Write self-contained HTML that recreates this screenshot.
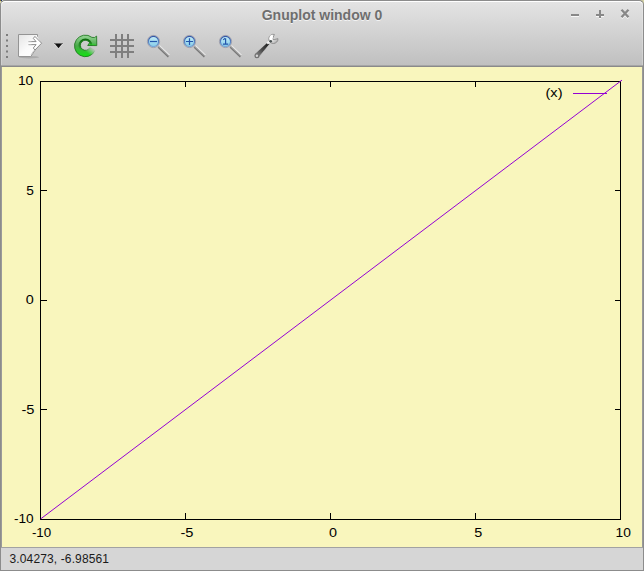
<!DOCTYPE html>
<html><head><meta charset="utf-8">
<style>
html,body{margin:0;padding:0;width:644px;height:571px;overflow:hidden;background:#c9c7a0;}
body{position:relative;font-family:"Liberation Sans",sans-serif;}
.abs{position:absolute;}
#frame{left:0;top:0;width:644px;height:571px;background:#8c8c8c;border-radius:5px 5px 0 0;}
#c1{left:0;top:0;width:1px;height:1px;background:#7a6c2a;}#c2{left:1px;top:0;width:1px;height:1px;background:#1c2c78;}#c3{left:2px;top:0;width:1px;height:1px;background:#c4d4c4;}#c4{left:0;top:1px;width:1px;height:2px;background:#d4d2a8;}#c5{left:643px;top:0;width:1px;height:2px;background:#d8d6a8;}
#head{left:1px;top:1px;width:642px;height:64px;background:linear-gradient(#e4e4e4,#c0c0c0);border-radius:4.5px 4.5px 0 0;box-shadow:inset 0 1px 0 #fff, inset 1px 0 0 rgba(255,255,255,0.22), inset -1px 0 0 rgba(255,255,255,0.22);}
#titletext{left:0;top:7px;width:644px;text-align:center;font-weight:bold;font-size:14px;color:#6e6e6e;text-shadow:0 1px 0 rgba(255,255,255,0.7);white-space:nowrap;}
#sep1{left:1px;top:65px;width:642px;height:1px;background:#a6a6a6;}
#sep2{left:1px;top:66px;width:642px;height:1px;background:#8a8a8a;}
#canvasside{left:1px;top:67px;width:642px;height:480px;background:#9a9a9a;}
#canvas{left:2px;top:67px;width:640px;height:480px;background:#f9f6bd;}
#sline{left:1px;top:547px;width:642px;height:1px;background:#a2a2a2;}
#status{left:1px;top:548px;width:642px;height:22px;background:#d6d6d6;}
#stext{left:9.5px;top:552px;font-size:12px;color:#1a1a1a;white-space:nowrap;letter-spacing:0.13px;}
</style></head><body>
<div id="frame" class="abs"></div><div id="c1" class="abs"></div><div id="c2" class="abs"></div><div id="c3" class="abs"></div><div id="c4" class="abs"></div><div id="c5" class="abs"></div>
<div id="head" class="abs"></div>
<div id="titletext" class="abs">Gnuplot window 0</div>
<div id="sep1" class="abs"></div>
<div id="sep2" class="abs"></div>
<div id="canvasside" class="abs"></div>
<div id="canvas" class="abs"></div>
<div id="sline" class="abs"></div>
<div id="status" class="abs"></div>
<div id="stext" class="abs">3.04273, -6.98561</div>

<svg class="abs" style="left:0;top:0" width="644" height="571" viewBox="0 0 644 571">
  <defs>
    <linearGradient id="lensg" x1="0" y1="0" x2="0" y2="1">
      <stop offset="0" stop-color="#c4ecf6"/>
      <stop offset="1" stop-color="#86cdea"/>
    </linearGradient>
    <linearGradient id="handleg" x1="0" y1="0" x2="1" y2="1">
      <stop offset="0" stop-color="#e8e8e8"/>
      <stop offset="1" stop-color="#6f6f6f"/>
    </linearGradient>
    <linearGradient id="rfade" gradientUnits="userSpaceOnUse" x1="94" y1="48.5" x2="87" y2="56">
      <stop offset="0" stop-color="#fff" stop-opacity="0"/>
      <stop offset="0.75" stop-color="#fff" stop-opacity="1"/>
    </linearGradient>
    <linearGradient id="greeng" x1="0" y1="0" x2="0" y2="1">
      <stop offset="0" stop-color="#98d698"/>
      <stop offset="0.5" stop-color="#48a848"/>
      <stop offset="1" stop-color="#12e212"/>
    </linearGradient>
    <linearGradient id="innerg" x1="0" y1="0" x2="0" y2="1">
      <stop offset="0" stop-color="#086808" stop-opacity="0.95"/>
      <stop offset="0.6" stop-color="#0a7a0a" stop-opacity="0.5"/>
      <stop offset="1" stop-color="#10c010" stop-opacity="0"/>
    </linearGradient>
    <linearGradient id="pageg" x1="0" y1="0" x2="1" y2="1">
      <stop offset="0" stop-color="#e4e4e4"/>
      <stop offset="0.5" stop-color="#fafafa"/>
      <stop offset="1" stop-color="#ffffff"/>
    </linearGradient>
    <linearGradient id="blueg" x1="0" y1="0" x2="0" y2="1">
      <stop offset="0" stop-color="#3458a8"/>
      <stop offset="1" stop-color="#78a8d8"/>
    </linearGradient>
    <linearGradient id="wrg" gradientUnits="userSpaceOnUse" x1="268" y1="43" x2="256" y2="56">
      <stop offset="0" stop-color="#1e1e1e"/>
      <stop offset="0.5" stop-color="#4a4a4a"/>
      <stop offset="1" stop-color="#8a8a8a"/>
    </linearGradient>
    <linearGradient id="headg" x1="0" y1="0" x2="1" y2="1">
      <stop offset="0" stop-color="#ffffff"/>
      <stop offset="0.45" stop-color="#eeeeee"/>
      <stop offset="1" stop-color="#9a9a9a"/>
    </linearGradient>
    <g id="mag">
      <path d="M158.4 46.1L168.9 56.1" stroke="#a4a4a4" stroke-width="3"/>
      <path d="M159.4 45.4L169.6 55.2" stroke="#ececec" stroke-width="1.1"/>
      <path d="M158.2 47.3L168.3 57" stroke="#777" stroke-width="1.1"/>
      <circle cx="153.5" cy="41.5" r="6.1" fill="none" stroke="#a0a0ac" stroke-width="1"/>
      <circle cx="153.5" cy="41.5" r="5.1" fill="url(#lensg)" stroke="url(#blueg)" stroke-width="1.2"/>
    </g>
  </defs>

  <!-- toolbar handle dots -->
  <g fill="#7c7c7c">
    <rect x="6" y="34" width="2" height="2"/>
    <rect x="6" y="39.5" width="2" height="2"/>
    <rect x="6" y="45" width="2" height="2"/>
    <rect x="6" y="50.5" width="2" height="2"/>
    <rect x="6" y="56" width="2" height="2"/>
  </g>

  <!-- export icon -->
  <g>
    <ellipse cx="29" cy="57.2" rx="10" ry="1.3" fill="#000" opacity="0.13"/>
    <path d="M18.5 34.5H37.5V37L41 43.2L35.5 49.5L30.8 56.5H18.5Z" fill="url(#pageg)"/>
    <path d="M37.5 36.6V34.5H18.5V56.5H30.8L35.3 49.8" fill="none" stroke="#949494" stroke-width="1"/>
    <path d="M28.6 41.6H36.1L33.3 38.4L34.9 36.4L41.6 43.2L35 50L33.3 48L36.1 44.6H28.6" fill="#fff" stroke="#8c8c8c" stroke-width="1" stroke-linejoin="round"/>
    <path d="M28.4 41.6H31.5M28.4 44.6H31.5" stroke="#d0d0d0" stroke-width="1.1" opacity="0.6"/>
    <path d="M34 50.5L31 55" stroke="#c4c4c4" stroke-width="1"/>
  </g>

  <!-- dropdown arrow -->
  <polygon points="53.4,43.4 63.6,43.4 58.5,49.2" fill="#fff" opacity="0.45"/>
  <polygon points="54.2,43 62.8,43 58.5,48.2" fill="#111"/>
  <path d="M54.5 43.5H62.5" stroke="#666" stroke-width="1"/>

  <!-- reload -->
  <mask id="rmask" maskUnits="userSpaceOnUse" x="70" y="30" width="32" height="32">
    <rect x="70" y="30" width="32" height="17" fill="#fff"/>
    <rect x="70" y="46" width="32" height="16" fill="url(#rfade)"/>
  </mask>
  <g mask="url(#rmask)">
    <clipPath id="rclip"><path d="M95.09 50.46A10.8 10.8 0 1 1 91.95 37.39L94.6 37.5L96.6 36.1L96.8 45.6L87.7 45.5L89.64 42.65A5.0 5.0 0 1 0 89.93 47.41Z"/></clipPath>
    <path d="M95.09 50.46A10.8 10.8 0 1 1 91.95 37.39L94.6 37.5L96.6 36.1L96.8 45.6L87.7 45.5L89.64 42.65A5.0 5.0 0 1 0 89.93 47.41Z" fill="url(#greeng)"/>
    <g clip-path="url(#rclip)">
      <circle cx="85.4" cy="45.3" r="5.8" fill="none" stroke="url(#innerg)" stroke-width="2.2"/>
      <ellipse cx="92" cy="45.2" rx="4" ry="1.6" fill="#22dd22" opacity="0.55"/>
    </g>
    <path d="M95.09 50.46A10.8 10.8 0 1 1 91.95 37.39L94.6 37.5L96.6 36.1L96.8 45.6L87.7 45.5L89.64 42.65A5.0 5.0 0 1 0 89.93 47.41Z" fill="none" stroke="#197019" stroke-width="1" stroke-opacity="0.8" stroke-linejoin="round"/>
  </g>

  <!-- grid -->
  <g fill="#7f7f7f">
    <rect x="115" y="34" width="2" height="24"/>
    <rect x="121" y="34" width="2" height="24"/>
    <rect x="127" y="34" width="2" height="24"/>
    <rect x="110" y="39" width="24" height="2"/>
    <rect x="110" y="45" width="24" height="2"/>
    <rect x="110" y="51" width="24" height="2"/>
  </g>

  <!-- zoom out / in / 1 -->
  <use href="#mag"/>
  <path d="M149.9 41.5H157.1" stroke="#2456ac" stroke-width="1.2"/>
  <use href="#mag" x="36"/>
  <path d="M185.9 41.5H193.1M189.5 38.2V45" stroke="#2456ac" stroke-width="1.2"/>
  <use href="#mag" x="72"/>
  <path d="M225.6 38.2V43.8M225.2 38.3L223.2 39.9M223 44.1H228.2" stroke="#2456ac" stroke-width="1.2" fill="none"/>

  <!-- wrench -->
  <g>
    <path d="M269.4 44.2L267.6 42.4L255 54L258.8 57.6Z" fill="url(#wrg)"/>
    <path d="M259.2 56.8L269.2 44.6" stroke="#d8d8d8" stroke-width="0.8" opacity="0.7"/>
    <circle cx="256.9" cy="55.8" r="2.5" fill="#727272"/>
    <circle cx="256.9" cy="55.8" r="1.2" fill="#d6d6d6"/>
    <path d="M267.2 43.6L269.2 41.6" stroke="#f0f0f0" stroke-width="2.2"/>
    <path d="M277.99 38.66A4.6 4.6 0 1 1 274.36 34.40L273.15 37.35A1.35 1.35 0 0 0 274.88 39.42Z" fill="url(#headg)" stroke="#8a8a8a" stroke-width="0.9" stroke-linejoin="round"/>
    <ellipse cx="271.2" cy="37.6" rx="1.6" ry="2.6" fill="#fff" transform="rotate(20 271.2 37.6)"/>
    <circle cx="270.7" cy="41.2" r="1.3" fill="#4a5252"/>
  </g>

  <!-- title buttons -->
  <g fill="#fff" opacity="0.8">
    <rect x="571" y="16" width="8" height="1"/>
    <rect x="596" y="16" width="8" height="1"/>
    <rect x="599" y="18" width="2" height="1"/>
  </g>
  <g fill="#888">
    <rect x="571" y="14" width="8" height="2"/>
    <rect x="596" y="14" width="8" height="2"/>
    <rect x="599" y="10" width="2" height="8"/>
  </g>
  <path d="M621.5 9.8L628.5 17.2M628.5 9.8L621.5 17.2" stroke="#fff" stroke-opacity="0.8" stroke-width="2.4" transform="translate(0,1)"/>
  <path d="M621.5 9.8L628.5 17.2M628.5 9.8L621.5 17.2" stroke="#888" stroke-width="2.4"/>

  <!-- plot border -->
  <rect x="40.5" y="81.5" width="580" height="438" fill="none" stroke="#000" stroke-width="1"/>
  <!-- ticks -->
  <g stroke="#000" stroke-width="1">
    <path d="M185.5 519V513M330.5 519V513M475.5 519V513M185.5 81V87M330.5 81V87M475.5 81V87"/>
    <path d="M40 190.5H47M40 300.5H47M40 409.5H47M620 190.5H615M620 300.5H615M620 409.5H615"/>
  </g>
  <!-- data line -->
  <path d="M40.8 518.8L622 80.1" stroke="#9400d3" stroke-width="1" fill="none"/>
  <path d="M573 93.5H607" stroke="#9400d3" stroke-width="1"/>
  <g font-family="Liberation Sans" font-size="12.5" fill="#000" lengthAdjust="spacingAndGlyphs">
    <text x="17.9" y="85" textLength="15.4" lengthAdjust="spacingAndGlyphs">10</text>
    <text x="26.3" y="195" textLength="7.6" lengthAdjust="spacingAndGlyphs">5</text>
    <text x="25.8" y="304" textLength="8" lengthAdjust="spacingAndGlyphs">0</text>
    <text x="21.5" y="414" textLength="13" lengthAdjust="spacingAndGlyphs">-5</text>
    <text x="13.9" y="523" textLength="19.7" lengthAdjust="spacingAndGlyphs">-10</text>
    <text x="31.9" y="537" textLength="19.3" lengthAdjust="spacingAndGlyphs">-10</text>
    <text x="180.5" y="537" textLength="13" lengthAdjust="spacingAndGlyphs">-5</text>
    <text x="329" y="537" textLength="8" lengthAdjust="spacingAndGlyphs">0</text>
    <text x="474.3" y="537" textLength="8" lengthAdjust="spacingAndGlyphs">5</text>
    <text x="615.5" y="537" textLength="15.3" lengthAdjust="spacingAndGlyphs">10</text>
    <text x="545.5" y="97" textLength="17" lengthAdjust="spacingAndGlyphs">(x)</text>
  </g>
</svg>
</body></html>
